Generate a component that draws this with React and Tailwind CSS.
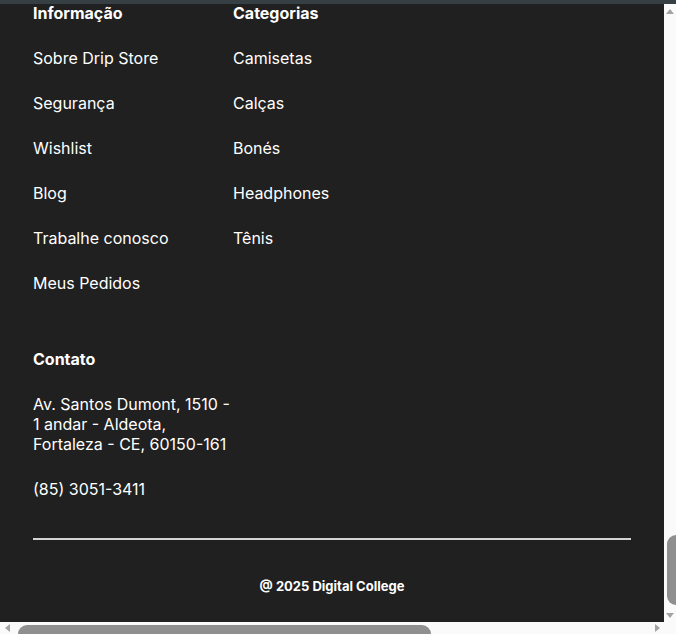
import React from "react";

const info = ["Sobre Drip Store", "Segurança", "Wishlist", "Blog", "Trabalhe conosco", "Meus Pedidos"];
const cats = ["Camisetas", "Calças", "Bonés", "Headphones", "Tênis"];

function Column({ title, items, className }) {
  return (
    <div className={className}>
      <h3 className="text-[16px] leading-4 font-bold">{title}</h3>
      <ul className="mt-[25px] flex flex-col gap-[21px]">
        {items.map((t) => (
          <li key={t} className="text-[16px] leading-6">
            <a href="#">{t}</a>
          </li>
        ))}
      </ul>
    </div>
  );
}

export default function App() {
  return (
    <div className="w-[676px] h-[634px] flex flex-col overflow-hidden bg-[#fafafa]">
      <div className="h-[4px] shrink-0 bg-[#363f44]" />
      <div className="flex flex-1 min-h-0">
        <footer
          className="flex-1 bg-[#202020] text-white px-[33px] pt-[0.5px] flex flex-col"
          style={{ fontFamily: "Inter, 'Noto Sans', sans-serif" }}
        >
          <div className="flex">
            <Column title="Informação" items={info} className="w-[200px]" />
            <Column title="Categorias" items={cats} />
          </div>
          <div className="mt-[56px] w-[200px]">
            <h3 className="text-[16px] leading-4 font-bold">Contato</h3>
            <p className="mt-[27px] text-[16px] leading-5">
              Av. Santos Dumont, 1510 - 1 andar - Aldeota, Fortaleza - CE, 60150-161
            </p>
            <p className="mt-[23px] text-[16px] leading-6">(85) 3051-3411</p>
          </div>
          <div className="mt-[37px] h-[2px] bg-[#d4d4d4]" />
          <p className="mt-[36px] text-center text-[13px] leading-5 font-bold">
            @ 2025 Digital College
          </p>
        </footer>
        <div className="w-[12px] shrink-0 bg-[#fafafa] flex flex-col items-end">
          <div className="h-[14px] w-full flex items-center justify-end pr-[2px]">
            <div className="w-0 h-0 border-l-[4px] border-r-[4px] border-b-[5px] border-l-transparent border-r-transparent border-b-[#a3a3a3]" />
          </div>
          <div className="flex-1 w-full flex flex-col justify-end items-end">
            <div className="w-[9px] h-[70px] rounded-l-full rounded-r-none bg-[#8f8f8f] mb-[3px]" />
          </div>
          <div className="h-[14px] w-full flex items-center justify-end pr-[2px]">
            <div className="w-0 h-0 border-l-[4px] border-r-[4px] border-t-[5px] border-l-transparent border-r-transparent border-t-[#a3a3a3]" />
          </div>
        </div>
      </div>
      <div className="h-[12px] shrink-0 bg-[#fafafa] flex items-start">
        <div className="w-[14px] h-[12px] flex items-center justify-center">
          <div className="w-0 h-0 border-t-[4px] border-b-[4px] border-r-[5px] border-t-transparent border-b-transparent border-r-[#a3a3a3]" />
        </div>
        <div className="ml-[4px] mt-[3px] w-[413px] h-[9px] rounded-t-full bg-[#8f8f8f]" />
        <div className="flex-1" />
        <div className="w-[14px] h-[12px] flex items-center justify-center mr-[12px]">
          <div className="w-0 h-0 border-t-[4px] border-b-[4px] border-l-[5px] border-t-transparent border-b-transparent border-l-[#a3a3a3]" />
        </div>
      </div>
    </div>
  );
}
